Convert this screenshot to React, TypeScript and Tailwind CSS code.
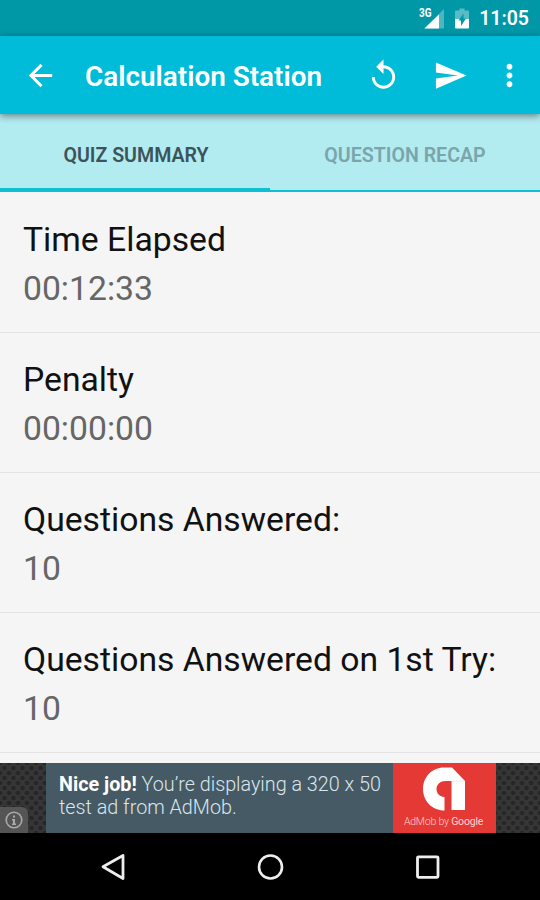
import type { ReactNode } from 'react';

interface SummaryItem {
  label: string;
  value: string;
}

const summary: SummaryItem[] = [
  { label: 'Time Elapsed', value: '00:12:33' },
  { label: 'Penalty', value: '00:00:00' },
  { label: 'Questions Answered:', value: '10' },
  { label: 'Questions Answered on 1st Try:', value: '10' },
];

function MaterialIcon({ children, className }: { children: ReactNode; className?: string }) {
  return (
    <svg viewBox="0 0 24 24" fill="currentColor" className={`h-[35px] w-[35px] shrink-0 ${className ?? ''}`}>
      {children}
    </svg>
  );
}

function StatusBar() {
  return (
    <div className="flex h-9 shrink-0 items-center justify-end bg-[#0097a7] pr-[11px] text-white">
      <svg viewBox="0 0 27 22" className="mr-[10px] h-[22px] w-[27px]">
        <text x="1" y="10" fontSize="12" fontWeight="700" textLength="12.5" lengthAdjust="spacingAndGlyphs" fill="#fff">
          3G
        </text>
        <path d="M26 2V21.5H6z" fill="#fff" fillOpacity="0.3" />
        <path d="M21 7.5V21.5H6.5z" fill="#fff" />
      </svg>
      <svg viewBox="0 0 14 21" className="mr-[10px] h-[21px] w-[14px]">
        <path d="M4.5 0.5h5v2H13q1 0 1 1V11H0V3.5q0-1 1-1h3.5z" fill="#fff" fillOpacity="0.35" />
        <path d="M0 11h14v8.5q0 1-1 1H1q-1 0-1-1z" fill="#fff" />
        <path d="M8.5 5.5v5H11L6 18v-5.5H3.5z" fill="#0097a7" />
      </svg>
      <span className="pt-[2px] text-[19.5px] leading-9 font-semibold">11:05</span>
    </div>
  );
}

function AppBar() {
  return (
    <header className="relative z-10 flex h-[78px] shrink-0 items-center bg-[#00bcd9] pr-[13px] pl-[23px] text-white shadow-[0_2px_7px_rgba(0,0,0,0.45)]">
      <MaterialIcon>
        <path d="M20 11H7.83l5.59-5.59L12 4l-8 8 8 8 1.41-1.41L7.83 13H20v-2z" />
      </MaterialIcon>
      <h1 className="ml-[27px] flex-1 pt-[3px] text-[27.9px] leading-9 font-semibold whitespace-nowrap">
        Calculation Station
      </h1>
      <MaterialIcon className="mr-[32px]">
        <path d="M12 5V1L7 6l5 5V7c3.31 0 6 2.69 6 6s-2.69 6-6 6-6-2.69-6-6H4c0 4.42 3.58 8 8 8s8-3.58 8-8-3.58-8-8-8z" />
      </MaterialIcon>
      <MaterialIcon className="mr-[24px]">
        <path d="M2.01 21L23 12 2.01 3 2 10l15 2-15 2z" />
      </MaterialIcon>
      <MaterialIcon>
        <path d="M12 8c1.1 0 2-.9 2-2s-.9-2-2-2-2 .9-2 2 .9 2 2 2zm0 2c-1.1 0-2 .9-2 2s.9 2 2 2 2-.9 2-2-.9-2-2-2zm0 6c-1.1 0-2 .9-2 2s.9 2 2 2 2-.9 2-2-.9-2-2-2z" />
      </MaterialIcon>
    </header>
  );
}

function Tabs() {
  return (
    <div className="flex h-[78px] shrink-0 bg-[#b2ebf0] text-[19.6px] font-semibold">
      <div className="flex w-1/2 items-center justify-center border-b-4 border-[#0fbfd4] pt-[10px] pl-0.5 text-[#3b545b]">
        QUIZ SUMMARY
      </div>
      <div className="flex w-1/2 items-center justify-center border-b-2 border-[#0fbfd4] pt-2 text-[#79a5ab]">
        QUESTION RECAP
      </div>
    </div>
  );
}

function AdBanner() {
  return (
    <div className="flex h-[70px] shrink-0 bg-[#363636] bg-[radial-gradient(circle,#262626_1.8px,transparent_2.6px),radial-gradient(circle,#262626_1.8px,transparent_2.6px)] bg-[size:9px_10px] bg-[position:0_0,4.5px_5px]">
      <div className="flex w-[46px] items-end">
        <div className="flex h-[26px] w-[28px] items-center justify-center rounded-tr-md bg-[#555]">
          <svg viewBox="0 0 18 18" className="h-[18px] w-[18px]">
            <circle cx="9" cy="9" r="7.8" fill="none" stroke="#aaa" strokeWidth="1.6" />
            <path d="M8 4.5h2v2H8zM7 8h3v4.5h1V14H7v-1.5h1v-3H7z" fill="#aaa" />
          </svg>
        </div>
      </div>
      <div className="w-[347px] bg-[#455a64] pt-[10px] pl-[13px] text-[19.75px] leading-[23px] font-light whitespace-nowrap text-[#dbe6ec]">
        <p>
          <b className="font-bold text-white">Nice job!</b> You’re displaying a 320 x 50
        </p>
        <p>test ad from AdMob.</p>
      </div>
      <div className="flex w-[103px] flex-col items-center bg-[#e53935] pt-1">
        <svg viewBox="0 0 44 44" className="mr-[2px] h-[44px] w-[44px]">
          <path d="M22.5 43.5C10 43.5 1 34 1 22S10 0.5 22 0.5h8L43 14v29H29.5V14h-6c-5 0-9 3.5-9 8s3 7.5 8 8z" fill="#fff" />
          <path d="M29.5 14h13.5" stroke="#ddd" strokeWidth="0.6" />
        </svg>
        <span className="mt-[3px] mr-[2px] text-[10.5px] leading-4 font-light tracking-[-0.2px] whitespace-nowrap text-[#ffd2cf]">
          AdMob by <span className="font-normal">Google</span>
        </span>
      </div>
    </div>
  );
}

function NavigationBar() {
  return (
    <nav className="flex h-[67px] shrink-0 items-center justify-center gap-[127px] bg-black">
      <svg viewBox="0 0 30 30" className="h-[30px] w-[30px]" fill="none" stroke="#eee" strokeWidth="2.8" strokeLinejoin="round">
        <path d="M25 3.5v23L5 14.8z" />
      </svg>
      <svg viewBox="0 0 30 30" className="h-[30px] w-[30px]" fill="none" stroke="#eee" strokeWidth="2.6">
        <circle cx="15.5" cy="15" r="11.5" />
      </svg>
      <svg viewBox="0 0 30 30" className="h-[30px] w-[30px]" fill="none" stroke="#eee" strokeWidth="2.8">
        <rect x="5.5" y="4.8" width="20.5" height="20.5" rx="1" />
      </svg>
    </nav>
  );
}

export default function App() {
  return (
    <div className="flex h-[900px] w-[540px] flex-col overflow-hidden bg-[#f5f5f5] font-['Roboto',sans-serif]">
      <StatusBar />
      <AppBar />
      <Tabs />
      <main className="flex-1 overflow-hidden pt-px">
        {summary.map((item) => (
          <div key={item.label} className="h-[140px] border-b border-[#e3e3e3] pt-[23px] pl-[23px] text-[33.7px] leading-[48.5px]">
            <div className="text-[#111]">{item.label}</div>
            <div className="text-[#666]">{item.value}</div>
          </div>
        ))}
      </main>
      <AdBanner />
      <NavigationBar />
    </div>
  );
}
